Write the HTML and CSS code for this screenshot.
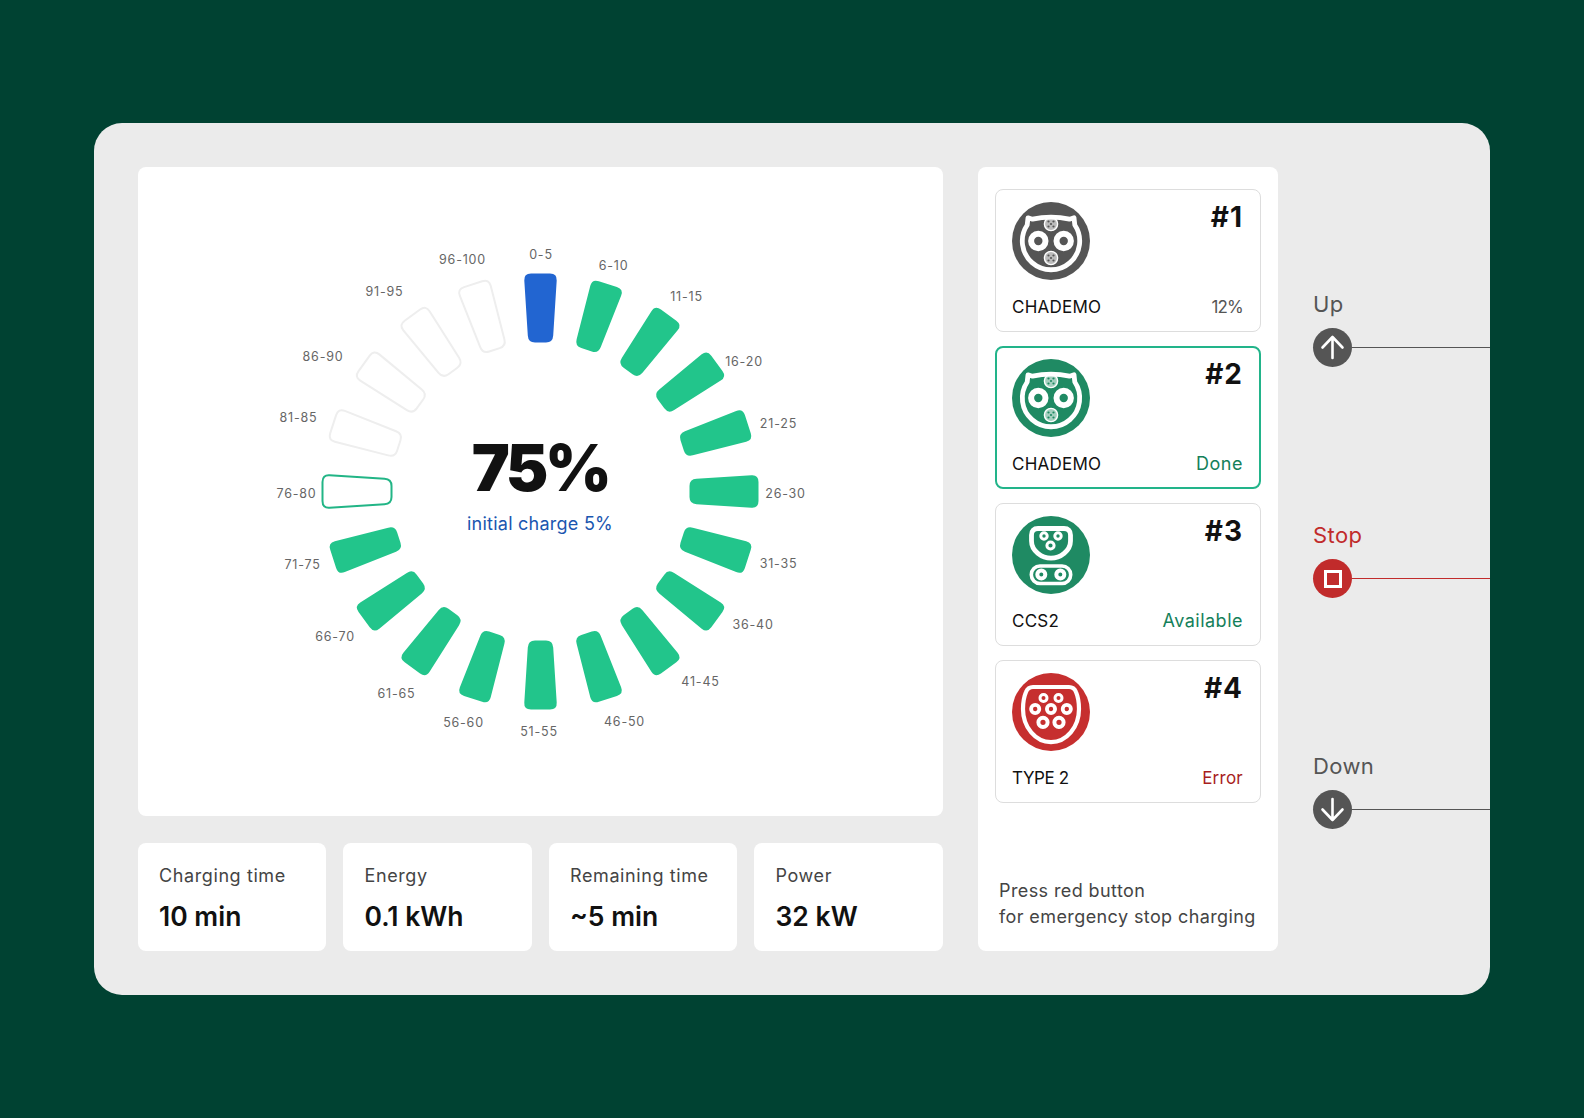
FILE: index.html
```html
<!DOCTYPE html>
<html lang="en">
<head>
    <meta charset="UTF-8">
    <meta name="viewport" content="width=device-width, initial-scale=1.0">
    <title>Charging station</title>
    <link rel="stylesheet" href="styles.css">
</head>
<body>
    <svg class="defs" width="0" height="0">
        <symbol id="chademo" viewBox="-39 -39 78 78">
            <circle r="39" fill="currentColor"/>
            <path d="M-18.500 -21.800 Q0 -25.800 18.500 -21.800 L23 -23.200 L23.800 -16 A28.700 28.700 0 1 1 -23.800 -16 L-23 -23.200 Z" fill="none" stroke="#fff" stroke-width="4.800" stroke-linejoin="round"/>
            <circle cx="-12.700" r="7.200" fill="none" stroke="#fff" stroke-width="6"/>
            <circle cx="12.700" r="7.200" fill="none" stroke="#fff" stroke-width="6"/>
            <g id="pins">
                <circle cy="-17" r="6.600" fill="#fff" fill-opacity=".6" stroke="#fff" stroke-width="1.400"/>
                <g fill="currentColor">
                    <circle cx="-2.500" cy="-19.500" r="1.100"/>
                    <circle cx="2.500" cy="-19.500" r="1.100"/>
                    <circle cx="-2.500" cy="-14.500" r="1.100"/>
                    <circle cx="2.500" cy="-14.500" r="1.100"/>
                    <circle cy="-17" r="1.100"/>
                </g>
            </g>
            <use href="#pins" transform="translate(0 34)"/>
        </symbol>
        <symbol id="ccs2" viewBox="-39 -39 78 78">
            <circle r="39" fill="currentColor"/>
            <path d="M-13 -26.500 H13 Q19.500 -26.500 19.500 -20 V-14 C19.500 -4 9 3.200 0 3.200 C-9 3.200 -19.500 -4 -19.500 -14 V-20 Q-19.500 -26.500 -13 -26.500 Z" fill="none" stroke="#fff" stroke-width="4.800"/>
            <rect x="-19.700" y="11" width="39.400" height="17.500" rx="8.700" fill="none" stroke="#fff" stroke-width="3.600"/>
            <g fill="none" stroke="#fff" stroke-width="3">
                <circle cx="-7" cy="-19" r="3.200"/>
                <circle cx="7" cy="-19" r="3.200"/>
                <circle cx="-0.500" cy="-9.500" r="3.600"/>
            </g>
            <g fill="none" stroke="#fff" stroke-width="4">
                <circle cx="-9.700" cy="19.500" r="4"/>
                <circle cx="9.300" cy="19.500" r="4"/>
            </g>
        </symbol>
        <symbol id="type2" viewBox="-39 -39 78 78">
            <circle r="39" fill="currentColor"/>
            <path d="M-18 -25 H18 Q23 -25 25 -20 Q28 -13 28 -3 A24.500 29 0 0 1 -28 -3 Q-28 -13 -25 -20 Q-23 -25 -18 -25 Z" fill="none" stroke="#fff" stroke-width="4.200"/>
            <g fill="none" stroke="#fff" stroke-width="3">
                <circle cx="-7.500" cy="-14" r="3.500"/>
                <circle cx="7.500" cy="-14" r="3.500"/>
            </g>
            <g fill="none" stroke="#fff" stroke-width="3.800">
                <circle cx="-15.800" cy="-3" r="4.100"/>
                <circle cy="-3" r="4.100"/>
                <circle cx="15.800" cy="-3" r="4.100"/>
            </g>
            <g fill="none" stroke="#fff" stroke-width="4">
                <circle cx="-8" cy="10.300" r="4.600"/>
                <circle cx="8" cy="10.300" r="4.600"/>
            </g>
        </symbol>
        <path id="seg" d="M-9.500 -218 H9.500 Q16.700 -218 16.200 -211 L12.700 -156 Q12.300 -149 5.500 -149 H-5.500 Q-12.300 -149 -12.700 -156 L-16.200 -211 Q-16.700 -218 -9.500 -218 Z"/>
    </svg>

    <main class="station">
        <section class="left">
            <div class="gauge-card">
                <svg class="gauge" viewBox="-402.500 -324.500 805 649">
                    <use href="#seg" class="seg-now"/>
                    <use href="#seg" class="seg-on" transform="rotate(18)"/>
                    <use href="#seg" class="seg-on" transform="rotate(36)"/>
                    <use href="#seg" class="seg-on" transform="rotate(54)"/>
                    <use href="#seg" class="seg-on" transform="rotate(72)"/>
                    <use href="#seg" class="seg-on" transform="rotate(90)"/>
                    <use href="#seg" class="seg-on" transform="rotate(108)"/>
                    <use href="#seg" class="seg-on" transform="rotate(126)"/>
                    <use href="#seg" class="seg-on" transform="rotate(144)"/>
                    <use href="#seg" class="seg-on" transform="rotate(162)"/>
                    <use href="#seg" class="seg-on" transform="rotate(180)"/>
                    <use href="#seg" class="seg-on" transform="rotate(198)"/>
                    <use href="#seg" class="seg-on" transform="rotate(216)"/>
                    <use href="#seg" class="seg-on" transform="rotate(234)"/>
                    <use href="#seg" class="seg-on" transform="rotate(252)"/>
                    <use href="#seg" class="seg-next" transform="rotate(270)"/>
                    <use href="#seg" class="seg-off" transform="rotate(288)"/>
                    <use href="#seg" class="seg-off" transform="rotate(306)"/>
                    <use href="#seg" class="seg-off" transform="rotate(324)"/>
                    <use href="#seg" class="seg-off" transform="rotate(342)"/>

                    <text x="0.500" y="-237">0-5</text>
                    <text x="73" y="-226.500">6-10</text>
                    <text x="146" y="-195.500">11-15</text>
                    <text x="203.500" y="-130.500">16-20</text>
                    <text x="238" y="-68.500">21-25</text>
                    <text x="245" y="1.500">26-30</text>
                    <text x="238" y="71.500">31-35</text>
                    <text x="212.500" y="133">36-40</text>
                    <text x="160" y="189.500">41-45</text>
                    <text x="84" y="229.500">46-50</text>
                    <text x="-1.500" y="240">51-55</text>
                    <text x="-77" y="231">56-60</text>
                    <text x="-144" y="201.500">61-65</text>
                    <text x="-205.500" y="145">66-70</text>
                    <text x="-238" y="73">71-75</text>
                    <text x="-244" y="1.500">76-80</text>
                    <text x="-242" y="-74">81-85</text>
                    <text x="-217.500" y="-135.500">86-90</text>
                    <text x="-156" y="-200.500">91-95</text>
                    <text x="-78" y="-232">96-100</text>
                </svg>
                <div class="gauge-center">
                    <div class="percent">75%</div>
                    <div class="initial">initial charge 5%</div>
                </div>
            </div>
            <div class="stats">
                <div class="stat"><div class="stat-label">Charging time</div><div class="stat-value">10 min</div></div>
                <div class="stat"><div class="stat-label">Energy</div><div class="stat-value">0.1 kWh</div></div>
                <div class="stat"><div class="stat-label">Remaining time</div><div class="stat-value">~5 min</div></div>
                <div class="stat"><div class="stat-label">Power</div><div class="stat-value">32 kW</div></div>
            </div>
        </section>

        <aside class="ports">
            <div class="port">
                <div class="port-top">
                    <svg class="port-icon grey"><use href="#chademo"/></svg>
                    <span class="port-num">#1</span>
                </div>
                <div class="port-bottom"><span>CHADEMO</span><span class="muted">12%</span></div>
            </div>
            <div class="port active">
                <div class="port-top">
                    <svg class="port-icon green"><use href="#chademo"/></svg>
                    <span class="port-num">#2</span>
                </div>
                <div class="port-bottom"><span>CHADEMO</span><span class="ok">Done</span></div>
            </div>
            <div class="port">
                <div class="port-top">
                    <svg class="port-icon green"><use href="#ccs2"/></svg>
                    <span class="port-num">#3</span>
                </div>
                <div class="port-bottom"><span>CCS2</span><span class="ok">Available</span></div>
            </div>
            <div class="port">
                <div class="port-top">
                    <svg class="port-icon red"><use href="#type2"/></svg>
                    <span class="port-num">#4</span>
                </div>
                <div class="port-bottom"><span class="tight">TYPE 2</span><span class="err">Error</span></div>
            </div>
            <p class="hint">Press red button<br>for emergency stop charging</p>
        </aside>

        <nav class="controls">
            <div class="control">
                <div class="control-label">Up</div>
                <div class="control-row">
                    <span class="round">
                        <svg width="39" height="39" viewBox="0 0 39 39"><path d="M19.500 30 V9 M9.500 19.500 L19.500 9 L29.500 19.500" fill="none" stroke="#fff" stroke-width="2.600" stroke-linecap="round" stroke-linejoin="round"/></svg>
                    </span>
                    <span class="wire"></span>
                </div>
            </div>
            <div class="control stop">
                <div class="control-label">Stop</div>
                <div class="control-row">
                    <span class="round"><span class="square"></span></span>
                    <span class="wire"></span>
                </div>
            </div>
            <div class="control">
                <div class="control-label">Down</div>
                <div class="control-row">
                    <span class="round">
                        <svg width="39" height="39" viewBox="0 0 39 39"><path d="M19.500 9 V30 M9.500 19.500 L19.500 30 L29.500 19.500" fill="none" stroke="#fff" stroke-width="2.600" stroke-linecap="round" stroke-linejoin="round"/></svg>
                    </span>
                    <span class="wire"></span>
                </div>
            </div>
        </nav>
    </main>
</body>
</html>
```
FILE: styles.css
```css
* { box-sizing: border-box; margin: 0; padding: 0; }
body { font-family: Inter, "Open Sans", sans-serif; background: #004232; height: 100vh; display: flex; justify-content: center; align-items: center; color: #111; }
.defs { position: absolute; }

.station { width: 1396px; height: 872px; background: #ebebeb; border-radius: 28px; padding: 44px 0 44px 43.5px; display: flex; }

.left { width: 805px; flex: none; display: flex; flex-direction: column; gap: 27px; }
.gauge-card { position: relative; height: 649px; background: #fff; border-radius: 8px; }
.gauge { display: block; width: 100%; height: 100%; }
.gauge text { font-size: 12.5px; letter-spacing: 0.8px; fill: #666; text-anchor: middle; dominant-baseline: central; }
.seg-now { fill: #2265d1; }
.seg-on { fill: #22c58b; }
.seg-next { fill: #fff; stroke: #22b586; stroke-width: 2px; }
.seg-off { fill: #fff; stroke: #eee; stroke-width: 2px; }
.gauge-center { position: absolute; inset: 0; padding-bottom: 14px; display: flex; flex-direction: column; align-items: center; justify-content: center; }
.percent { font-size: 64px; font-weight: 900; line-height: 72px; letter-spacing: -3.5px; color: #111; }
.initial { font-size: 18px; line-height: 26px; letter-spacing: 0.25px; color: #1a56b0; margin-top: 7px; }

.stats { display: grid; grid-template-columns: repeat(4, 1fr); gap: 17px; height: 108px; }
.stat { background: #fff; border-radius: 8px; padding: 21px 10px 0 21.5px; }
.stat-label { font-size: 18px; line-height: 24px; letter-spacing: 0.6px; color: #444; }
.stat-value { font-size: 26.5px; font-weight: 600; line-height: 36px; margin-top: 10px; color: #111; }

.ports { width: 300px; flex: none; margin-left: 35.5px; background: #fff; border-radius: 8px; padding: 22px 17px 0; display: flex; flex-direction: column; gap: 14px; }
.port { height: 143px; border: 1px solid #ddd; border-radius: 8px; padding: 12px 17px 13px 16px; display: flex; flex-direction: column; justify-content: space-between; }
.port.active { border: 2px solid #22b48a; padding: 11px 16px 12px 15px; }
.port-top { display: flex; justify-content: space-between; align-items: flex-start; }
.port-icon { width: 78px; height: 78px; display: block; }
.grey { color: #555; }
.green { color: #1f8a63; }
.red { color: #c62f2f; }
.port-num { font-size: 28px; font-weight: 700; line-height: 30px; letter-spacing: 1px; color: #111; }
.port-bottom { display: flex; justify-content: space-between; font-size: 17px; line-height: 22px; letter-spacing: 0.25px; color: #111; }
.tight { letter-spacing: -0.4px; }
.muted { color: #555; letter-spacing: -0.8px; }
.ok { color: #15805a; font-size: 18px; letter-spacing: 0.5px; }
.err { color: #a81e1e; }
.hint { margin-top: auto; margin-bottom: 21px; padding-left: 4px; font-size: 18px; line-height: 26px; letter-spacing: 0.4px; color: #444; white-space: nowrap; }

.controls { flex: 1; margin-left: 35px; padding-top: 121px; display: flex; flex-direction: column; gap: 152px; }
.control-label { font-size: 22px; line-height: 32px; letter-spacing: 0.4px; color: #555; }
.control-row { display: flex; align-items: center; margin-top: 8px; height: 39px; }
.round { width: 39px; height: 39px; border-radius: 50%; background: #555; display: flex; align-items: center; justify-content: center; flex: none; }
.wire { flex: 1; height: 1px; background: #555; }
.stop .control-label { color: #c12b2b; }
.stop .round, .stop .wire { background: #c12b2b; }
.square { width: 18px; height: 18px; border: 3px solid #fff; }
```
